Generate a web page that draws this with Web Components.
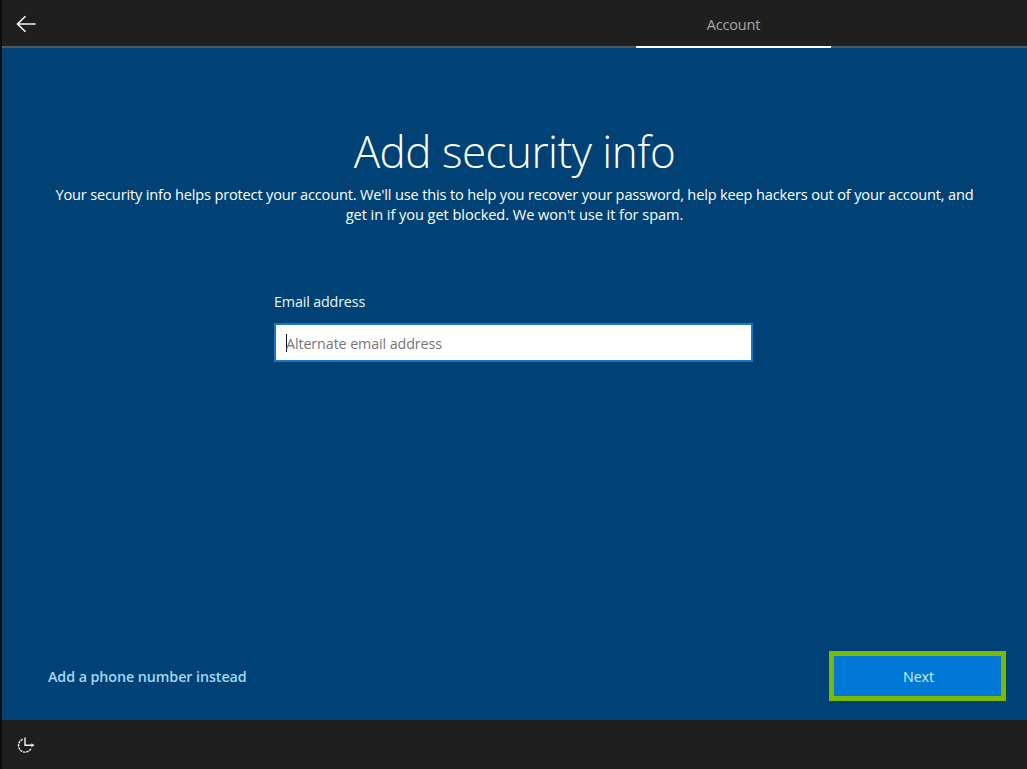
<!DOCTYPE html>
<html>
<head>
<meta charset="utf-8">
<title>Add security info</title>
<style>
  html, body { margin: 0; height: 100%; background: #004275; }
  body { font-family: "Open Sans", "Noto Sans", sans-serif; overflow: hidden; }
</style>
</head>
<body>
<oobe-shell>
  <oobe-header slot="header" section="Account"></oobe-header>
  <security-form slot="main"></security-form>
  <oobe-footer slot="footer"></oobe-footer>
</oobe-shell>

<script>
class OobeShell extends HTMLElement {
  constructor() {
    super();
    this.attachShadow({mode: 'open'}).innerHTML = `<style>
      :host {
        display: grid;
        grid-template-rows: 48px 1fr 49px;
        height: 769px;
        box-sizing: border-box;
        border-left: 2px solid #0c0c0c;
        background: #004275;
      }
    </style>
    <slot name="header"></slot>
    <slot name="main"></slot>
    <slot name="footer"></slot>`;
  }
}

class OobeHeader extends HTMLElement {
  connectedCallback() {
    const section = this.getAttribute('section');
    this.attachShadow({mode: 'open'}).innerHTML = `<style>
      :host {
        display: flex;
        justify-content: space-between;
        background: #1f1f1f;
        border-bottom: 2px solid #4d5861;
        box-sizing: border-box;
        height: 48px;
        position: relative;
      }
      svg { display: block; margin: 15px 0 0 14px; }
      .tab {
        width: 195px;
        margin-right: 196px;
        height: 48px;
        box-sizing: border-box;
        border-bottom: 2px solid #fff;
        text-align: center;
        color: #a6a6a6;
        font-size: 14.5px;
        line-height: 50px;
        letter-spacing: -0.2px;
      }
    </style>
    <svg width="20" height="18" viewBox="0 0 20 18" fill="none" stroke="#f2f2f2" stroke-width="1.6">
      <path d="M19.5 9H2M9.5 1.2 1.5 9l8 7.8"/>
    </svg>
    <div class="tab">${section}</div>`;
  }
}

class SecurityForm extends HTMLElement {
  constructor() {
    super();
    this.attachShadow({mode: 'open'}).innerHTML = `<style>
      :host {
        display: flex;
        flex-direction: column;
        position: relative;
        color: #fff;
        height: 672px;
      }
      h1 {
        margin: 73px 0 0;
        font-size: 44px;
        font-weight: 300;
        line-height: 60px;
        text-align: center;
        letter-spacing: -0.5px;
      }
      p {
        margin: 3px 0 0;
        padding: 0 48px;
        font-size: 14.6px;
        line-height: 20px;
        text-align: center;
        letter-spacing: -0.175px;
      }
      p span { letter-spacing: -0.06px; }
      .field { margin: 68px 0 0 272px; width: 479px; }
      label { display: block; font-size: 14.3px; line-height: 20px; letter-spacing: -0.15px; color: #e8f6ff; }
      .box {
        margin-top: 11px;
        height: 39px;
        box-sizing: border-box;
        background: #fff;
        border: 2px solid #1a78c2;
        padding-left: 10px;
        display: flex;
        align-items: center;
        font-size: 14.3px;
        letter-spacing: -0.1px;
        color: #767676;
      }
      .box .hint { padding-top: 2px; }
      .caret { width: 1px; height: 18px; background: #111; margin-right: -1px; }
      .bottom {
        margin-top: auto;
        padding: 0 21px 19px 46px;
        display: flex;
        justify-content: space-between;
        align-items: center;
      }
      a { color: #a3d7f7; font-size: 14.3px; font-weight: 600; letter-spacing: -0.08px; }
    </style>
    <h1>Add security info</h1>
    <p>Your security info helps protect your account. We'll use this to help you recover your password, help keep hackers out of your account, and<br><span>get in if you get blocked. We won't use it for spam.</span></p>
    <div class="field">
      <label>Email address</label>
      <div class="box"><span class="caret"></span><span class="hint">Alternate email address</span></div>
    </div>
    <div class="bottom">
      <a>Add a phone number instead</a>
      <next-button>Next</next-button>
    </div>`;
  }
}

class NextButton extends HTMLElement {
  constructor() {
    super();
    this.attachShadow({mode: 'open'}).innerHTML = `<style>
      :host {
        display: flex;
        align-items: center;
        justify-content: center;
        box-sizing: border-box;
        width: 177px;
        height: 50px;
        padding-left: 2px;
        background: #0078d7;
        border: 5px solid #7cba00;
        color: #cdeeff;
        font-size: 14.3px;
        letter-spacing: -0.1px;
      }
    </style><slot></slot>`;
  }
}

class OobeFooter extends HTMLElement {
  constructor() {
    super();
    this.attachShadow({mode: 'open'}).innerHTML = `<style>
      :host { display: block; height: 49px; background: #1f1f1f; }
      svg { display: block; margin: 16px 0 0 15px; }
    </style>
    <svg width="19" height="18" viewBox="0 0 19 18" fill="none" stroke="#f2f2f2" stroke-width="1.4">
      <path d="M5.6 3.4A6.6 6.6 0 1 0 14.2 12" stroke-dasharray="2.4 .8"/>
      <path d="M8 1.6v7.6h7"/>
      <path d="M14.4 7.2 17.6 9.2l-3.2 2z" fill="#f2f2f2" stroke="none"/>
    </svg>`;
  }
}

customElements.define('oobe-shell', OobeShell);
customElements.define('oobe-header', OobeHeader);
customElements.define('security-form', SecurityForm);
customElements.define('next-button', NextButton);
customElements.define('oobe-footer', OobeFooter);
</script>
</body>
</html>
